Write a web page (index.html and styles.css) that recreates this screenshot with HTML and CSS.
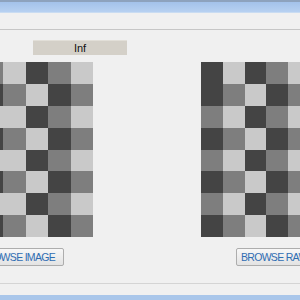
FILE: index.html
```html
<!DOCTYPE html>
<html lang="en">
<head>
    <meta charset="UTF-8">
    <meta name="viewport" content="width=device-width, initial-scale=1.0">
    <title>Image Viewer</title>
    <link rel="stylesheet" href="styles.css">
</head>
<body>
    <div class="window">
        <div class="titlebar"></div>
        <div class="toolbar"></div>
        <div class="main">
            <div class="panel panel-left">
                <div class="info">Inf</div>
                <div class="board board-left">
                    <span class="m"></span><span class="l"></span><span class="d"></span><span class="m"></span><span class="l"></span>
                    <span class="d"></span><span class="m"></span><span class="l"></span><span class="d"></span><span class="m"></span>
                    <span class="l"></span><span class="l"></span><span class="d"></span><span class="m"></span><span class="l"></span>
                    <span class="d"></span><span class="m"></span><span class="l"></span><span class="d"></span><span class="m"></span>
                    <span class="l"></span><span class="l"></span><span class="d"></span><span class="m"></span><span class="l"></span>
                    <span class="d"></span><span class="m"></span><span class="l"></span><span class="d"></span><span class="m"></span>
                    <span class="l"></span><span class="l"></span><span class="d"></span><span class="m"></span><span class="l"></span>
                    <span class="d"></span><span class="m"></span><span class="l"></span><span class="d"></span><span class="m"></span>
                </div>
                <button class="btn btn-image">BROWSE IMAGE</button>
            </div>
            <div class="panel panel-right">
                <div class="board board-right">
                    <span class="d"></span><span class="l"></span><span class="d"></span><span class="m"></span><span class="l"></span>
                    <span class="d"></span><span class="m"></span><span class="l"></span><span class="d"></span><span class="m"></span>
                    <span class="m"></span><span class="l"></span><span class="d"></span><span class="m"></span><span class="l"></span>
                    <span class="d"></span><span class="m"></span><span class="l"></span><span class="d"></span><span class="m"></span>
                    <span class="m"></span><span class="l"></span><span class="d"></span><span class="m"></span><span class="l"></span>
                    <span class="d"></span><span class="m"></span><span class="l"></span><span class="d"></span><span class="m"></span>
                    <span class="m"></span><span class="l"></span><span class="d"></span><span class="m"></span><span class="l"></span>
                    <span class="d"></span><span class="m"></span><span class="l"></span><span class="d"></span><span class="m"></span>
                </div>
                <button class="btn btn-raw">BROWSE RAW</button>
            </div>
        </div>
        <div class="footer"></div>
    </div>
</body>
</html>
```

FILE: styles.css
```css
:root {
    --window-bg: #f0f0f0;
    --cell-dark: #444444;
    --cell-mid: #7e7e7e;
    --cell-light: #c9c9c9;
    --link-blue: #2f6db3;
}
body {
    margin: 0;
    width: 300px;
    height: 300px;
    overflow: hidden;
    background-color: var(--window-bg);
    font-family: 'Liberation Sans', Arial, sans-serif;
}
.window {
    display: flex;
    flex-direction: column;
    height: 300px;
}
.titlebar {
    height: 13px;
    box-sizing: border-box;
    border-top: 2px solid #8da2bd;
    border-bottom: 1px solid #c9dcf2;
    background: linear-gradient(to bottom, #a3c2ea, #b7d1f1);
}
.toolbar {
    height: 16px;
    border-bottom: 1px solid #c6c6c6;
}
.main {
    flex: 1;
    display: flex;
    padding-top: 10px;
}
.panel {
    display: flex;
    flex-direction: column;
}
.panel-left {
    margin-left: -19px;
    width: 112px;
}
.panel-right {
    margin-left: 108px;
    padding-top: 15px; /* line up with the left board under the info box */
}
.info {
    margin-left: 52px;
    width: 94px;
    height: 15px;
    box-sizing: border-box;
    border-top: 1px solid #e2dfd8;
    background-color: #d4d0c8;
    color: #111111;
    font-size: 11px;
    line-height: 14px;
    text-align: center;
}
.board {
    display: grid;
    grid-template-rows: repeat(8, 21.9px);
    margin-top: 7px;
}
.board-left {
    grid-template-columns: repeat(5, 22.4px);
}
.board-right {
    grid-template-columns: repeat(5, 21.8px);
}
.board .d { background-color: var(--cell-dark); }
.board .m { background-color: var(--cell-mid); }
.board .l { background-color: var(--cell-light); }
.btn {
    height: 18px;
    margin-top: 11px;
    border: 1px solid #adadad;
    border-radius: 2px;
    background: linear-gradient(to bottom, #f7f7f7, #e3e3e3);
    color: var(--link-blue);
    font-family: 'Liberation Sans', Arial, sans-serif;
    font-size: 10.5px;
    letter-spacing: -0.7px;
    white-space: nowrap;
    padding: 0;
}
.btn-image {
    width: 106px;
    margin-left: -23px;
    padding-right: 8px;
    text-align: right;
}
.btn-raw {
    align-self: flex-start;
    margin-left: 35px;
    padding: 0 10px 0 4px;
    text-align: left;
}
.footer {
    height: 11px;
    border-top: 1px solid #d4d4d4;
    border-bottom: 5px solid #a9c6ea;
}
```
